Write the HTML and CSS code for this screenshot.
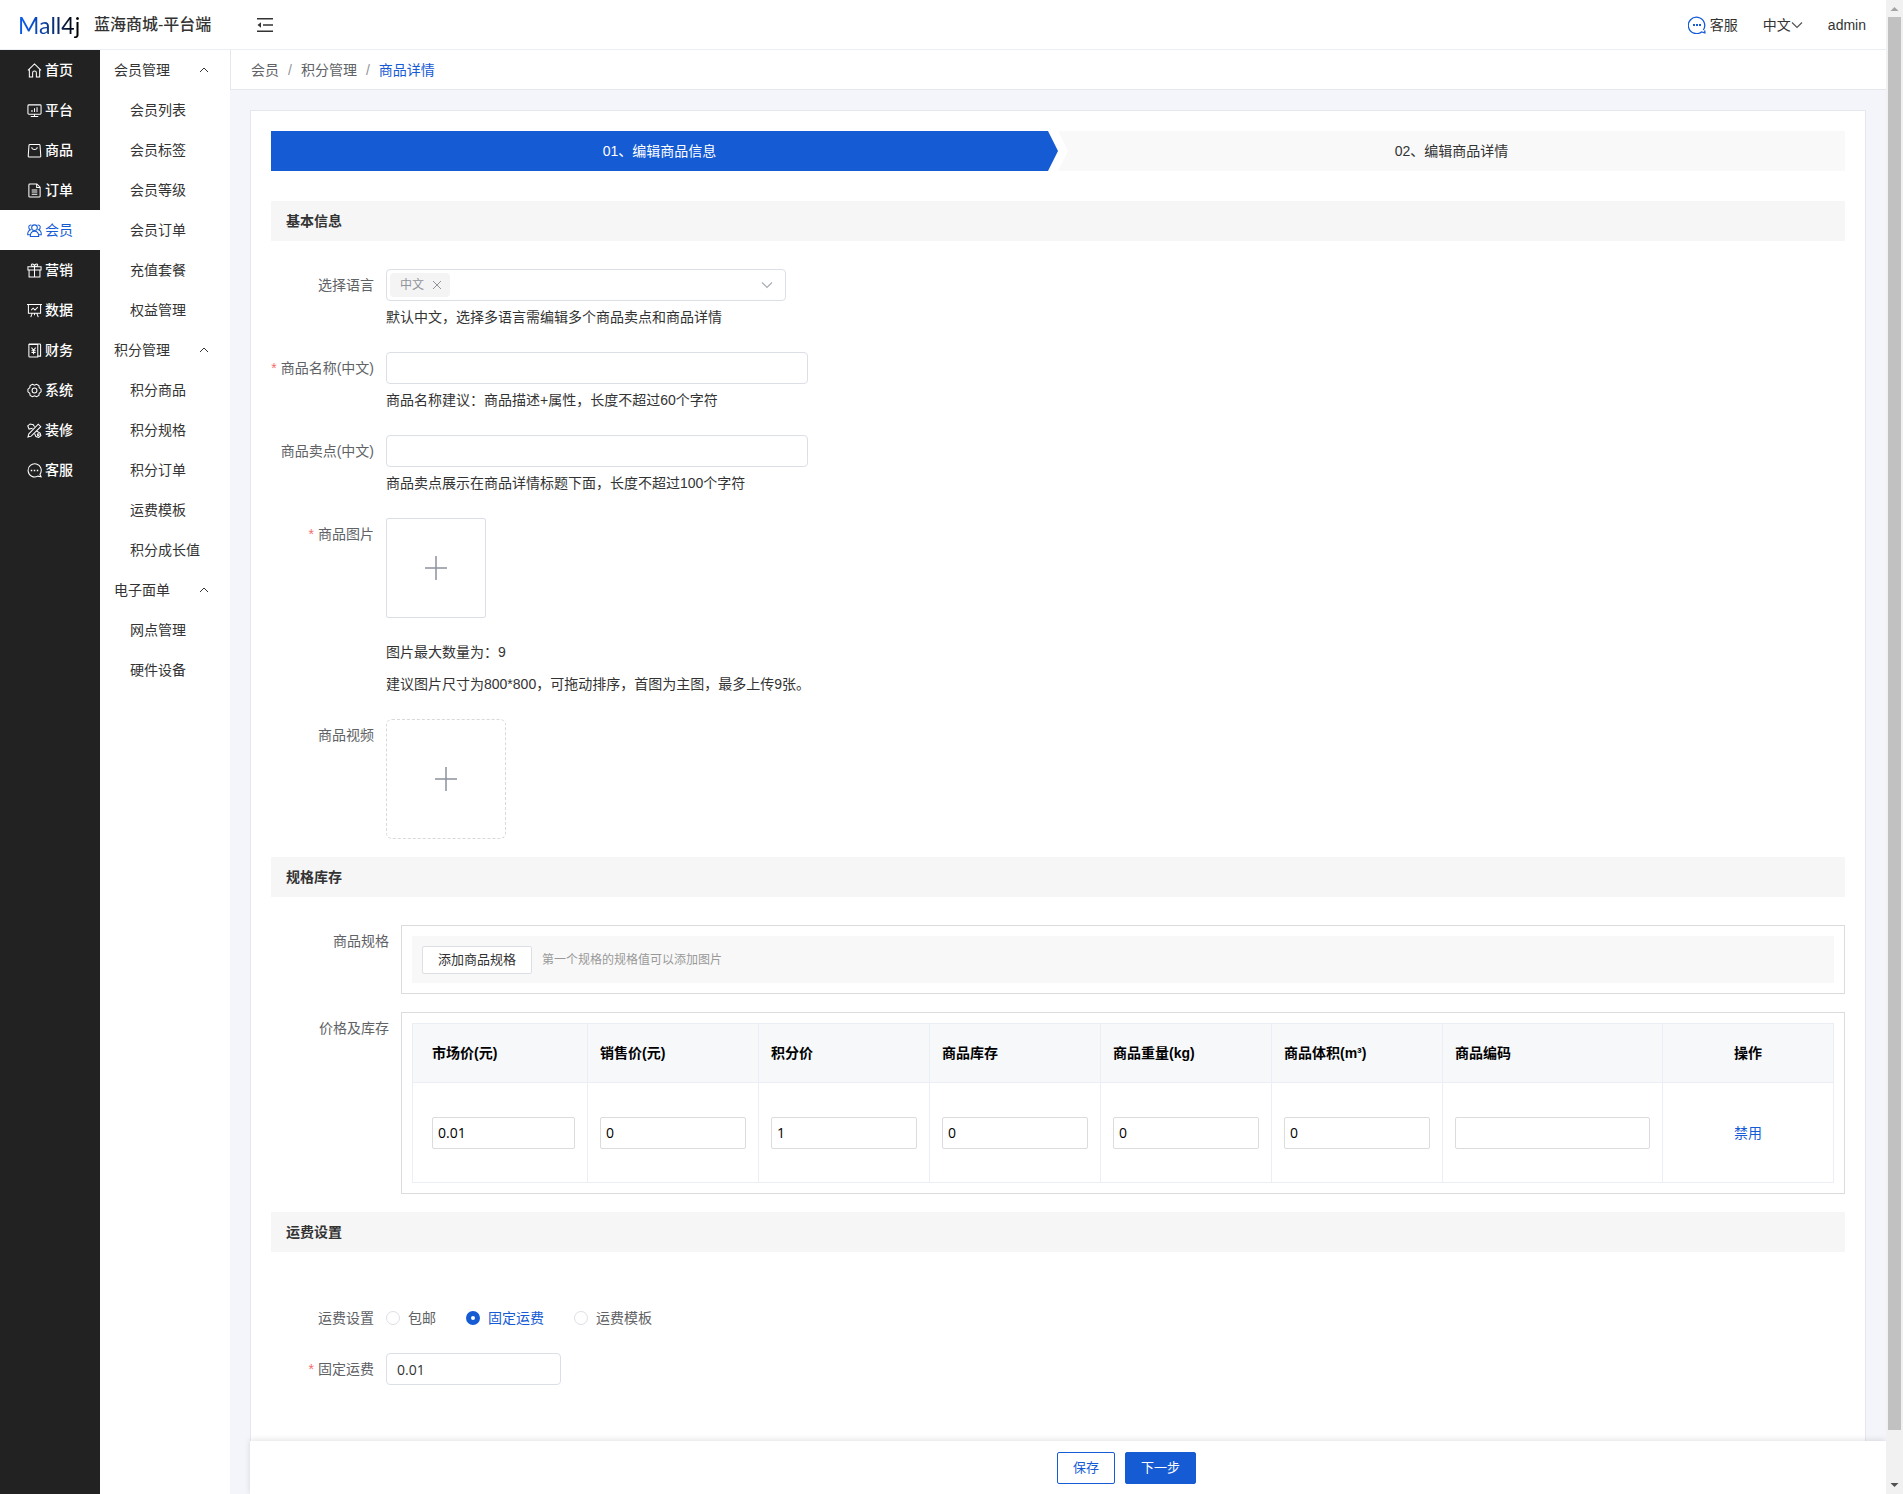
FILE: index.html
```html
<!DOCTYPE html>
<html lang="zh-CN">
<head>
<meta charset="utf-8">
<meta name="viewport" content="width=device-width, initial-scale=1">
<title>蓝海商城-平台端</title>
<link rel="stylesheet" href="styles.css">
</head>
<body>
<div class="app">
  <header class="topbar">
    <a class="brand" href="#"><span class="brand-mark">Mall4j</span><span class="brand-name">蓝海商城-平台端</span></a>
    <button class="fold" type="button" aria-label="折叠菜单">
      <svg width="16" height="14" viewBox="0 0 16 14"><path d="M0 .8h16M6 7h10M0 13.2h16" fill="none" stroke="#333" stroke-width="1.4"/><path d="M4 4.2v5.600L.5 7z" fill="#333"/></svg>
    </button>
    <nav class="tools">
      <a class="tool service" href="#"><svg width="18" height="18" viewBox="0 0 18 18" fill="none" stroke="#155bd4" stroke-width="1.3"><path d="M15.300 14A8.200 8.200 0 1 0 13.500 15.900l3.400.9-.2-2.400"/><path d="M5 9h2M8 9h2M11 9h2" stroke-width="2"/></svg>客服</a>
      <a class="tool lang" href="#">中文<svg width="12" height="8" viewBox="0 0 12 8"><path d="M1 1.500l5 5 5-5" fill="none" stroke="#555" stroke-width="1.2"/></svg></a>
      <a class="tool" href="#">admin</a>
    </nav>
  </header>

  <nav class="main-nav">
    <a href="#"><svg viewBox="0 0 16 16"><path d="M1 7.800 8 1l7 6.800M2.500 6.800V15H6v-4.500a2 2 0 0 1 4 0V15h3.500V6.800"/></svg>首页</a>
    <a href="#"><svg viewBox="0 0 16 16"><rect x="1" y="2" width="14" height="10" rx="1"/><path d="M4 14.500h8M8 12v2.500M5.300 9.500v-2M8 9.500v-4M10.700 9.500v-5"/></svg>平台</a>
    <a href="#"><svg viewBox="0 0 16 16"><path d="M3 1.500h10q.8 0 .9 1l.8 11.500q0 1-1 1H2.300q-1 0-1-1l.8-11.500q.1-1 .9-1z"/><path d="M5 4.500c.5 3.300 5.500 3.300 6 0"/></svg>商品</a>
    <a href="#"><svg viewBox="0 0 16 16"><path d="M3 1h7.500L14 4.500V14q0 1-1 1H3q-1 0-1-1V2q0-1 1-1zM10.300 1v3.700H14M5 7.500h6M5 9.700h6M5 12h6"/></svg>订单</a>
    <a href="#" class="current" aria-current="page"><svg viewBox="0 0 16 16"><circle cx="8" cy="5" r="3"/><path d="M3.500 14.500c0-7.500 9-7.500 9 0zM4.700 2.300C1.500 1.500.8 5.800 3.600 7.200 1.600 8 .7 9.700.7 12.500h2.600M11.300 2.300c3.200-.8 3.900 3.500 1.100 4.900 2 .8 2.900 2.500 2.900 5.300h-2.600"/></svg>会员</a>
    <a href="#"><svg viewBox="0 0 16 16"><path d="M1 4h14v3.500H1zM2.200 7.500V15h11.600V7.500M8 4v11M8 4C4 4 4 1 5.500 1S8 2.500 8 4c0-1.500 1-3 2.500-3S12 4 8 4"/></svg>营销</a>
    <a href="#"><svg viewBox="0 0 16 16"><path d="M0 1.500h16M1.500 1.500V11h13V1.500M4.500 7.500l2-2 2 2 3-3M5.500 11 4 15M10.500 11l1.500 4M8 11v2"/></svg>数据</a>
    <a href="#"><svg viewBox="0 0 16 16"><path d="M2 1.500h9.500V15H3q-1 0-1-1zM2 1h11.500q1 0 1 1v12h-3"/><path d="m4.800 5 2.200 2.700L9.200 5M7 7.700V12M4.800 8.300h4.400M4.800 10.200h4.400"/></svg>财务</a>
    <a href="#"><svg viewBox="0 0 16 16"><path d="M5.800 1.300 8 2.300l2.200-1 2.500 1.400.3 2.400 2 1.500v2.800l-2 1.500-.3 2.400-2.500 1.400-2.200-1-2.200 1-2.500-1.400L3 10.900 1 9.400V6.600l2-1.500.3-2.400z"/><circle cx="8" cy="8" r="2.600"/></svg>系统</a>
    <a href="#"><svg viewBox="0 0 16 16"><path d="m1 15 1-3.500L12 1.300l2.700 2.600L4.500 14zM6 5.500 2.200 6.500.8 3l2.500-2 3.400.8L8 4M10 8.500l4 2.200.8 2.800-2.300 1.800-3-.8-1.300-3"/><circle cx="12" cy="12.500" r="1"/></svg>装修</a>
    <a href="#"><svg viewBox="0 0 16 16"><path d="M13.800 12A7 7 0 1 0 11.500 14l3.500.7z"/><path d="M4 8h1.600M7.200 8h1.600M10.400 8H12" stroke-width="1.600"/></svg>客服</a>
  </nav>

  <nav class="sub-nav">
    <button type="button" aria-expanded="true">会员管理<svg viewBox="0 0 10 6"><path d="m1 5 4-4 4 4"/></svg></button>
    <a href="#">会员列表</a><a href="#">会员标签</a><a href="#">会员等级</a><a href="#">会员订单</a><a href="#">充值套餐</a><a href="#">权益管理</a>
    <button type="button" aria-expanded="true">积分管理<svg viewBox="0 0 10 6"><path d="m1 5 4-4 4 4"/></svg></button>
    <a href="#">积分商品</a><a href="#">积分规格</a><a href="#">积分订单</a><a href="#">运费模板</a><a href="#">积分成长值</a>
    <button type="button" aria-expanded="true">电子面单<svg viewBox="0 0 10 6"><path d="m1 5 4-4 4 4"/></svg></button>
    <a href="#">网点管理</a><a href="#">硬件设备</a>
  </nav>

  <main class="main">
    <nav class="crumbs" aria-label="面包屑"><a href="#">会员</a><span class="sep">/</span><a href="#">积分管理</a><span class="sep">/</span><a class="here" href="#">商品详情</a></nav>

    <form class="card" id="goods">
      <ol class="steps">
        <li class="step active">01、编辑商品信息</li>
        <li class="step">02、编辑商品详情</li>
      </ol>

      <h2 class="section-title first">基本信息</h2>
      <div class="rows">
        <div class="row">
          <label class="label" for="lang">选择语言</label>
          <div>
            <div class="multi-select">
              <span class="tag">中文<button type="button" aria-label="移除中文"><svg width="10" height="10" viewBox="0 0 10 10"><path d="m1 1 8 8M9 1 1 9" fill="none" stroke="#909399"/></svg></button></span>
              <select id="lang"><option></option><option>English</option></select>
              <svg class="caret" width="12" height="8" viewBox="0 0 12 8"><path d="m1 1.500 5 5 5-5" fill="none" stroke="#a8abb2" stroke-width="1.200"/></svg>
            </div>
            <p class="hint">默认中文，选择多语言需编辑多个商品卖点和商品详情</p>
          </div>
        </div>
        <div class="row">
          <label class="label required" for="name">商品名称(中文)</label>
          <div>
            <input class="input wide" id="name" type="text">
            <p class="hint">商品名称建议：商品描述+属性，长度不超过60个字符</p>
          </div>
        </div>
        <div class="row">
          <label class="label" for="brief">商品卖点(中文)</label>
          <div>
            <input class="input wide" id="brief" type="text">
            <p class="hint">商品卖点展示在商品详情标题下面，长度不超过100个字符</p>
          </div>
        </div>
        <div class="row">
          <span class="label required">商品图片</span>
          <div>
            <button class="upload picture" type="button" aria-label="上传商品图片"><svg width="24" height="24" viewBox="0 0 24 24"><path d="M12 0v24M1 12h22" fill="none" stroke="#8c939d" stroke-width="1.500"/></svg></button>
            <p class="hint">图片最大数量为：9</p>
            <p class="hint">建议图片尺寸为800*800，可拖动排序，首图为主图，最多上传9张。</p>
          </div>
        </div>
        <div class="row">
          <span class="label">商品视频</span>
          <div>
            <button class="upload video" type="button" aria-label="上传商品视频"><svg width="24" height="24" viewBox="0 0 24 24"><path d="M12 0v24M1 12h22" fill="none" stroke="#8c939d" stroke-width="1.500"/></svg></button>
          </div>
        </div>
      </div>

      <h2 class="section-title">规格库存</h2>
      <div class="rows stock">
        <div class="row">
          <span class="label">商品规格</span>
          <div class="box">
            <div class="spec-bar"><button class="small-btn" type="button">添加商品规格</button><span>第一个规格的规格值可以添加图片</span></div>
          </div>
        </div>
        <div class="row">
          <span class="label">价格及库存</span>
          <div class="box">
            <table class="sku">
              <thead>
                <tr><th class="first-col">市场价(元)</th><th>销售价(元)</th><th>积分价</th><th>商品库存</th><th>商品重量(kg)</th><th>商品体积(m³)</th><th class="code-col">商品编码</th><th class="action">操作</th></tr>
              </thead>
              <tbody>
                <tr>
                  <td class="first-col"><input type="text" aria-label="市场价" value="0.01"></td>
                  <td><input type="text" aria-label="销售价" value="0"></td>
                  <td><input type="text" aria-label="积分价" value="1"></td>
                  <td><input type="text" aria-label="商品库存" value="0"></td>
                  <td><input type="text" aria-label="商品重量" value="0"></td>
                  <td><input type="text" aria-label="商品体积" value="0"></td>
                  <td><input type="text" aria-label="商品编码"></td>
                  <td class="action"><a href="#">禁用</a></td>
                </tr>
              </tbody>
            </table>
          </div>
        </div>
      </div>

      <h2 class="section-title">运费设置</h2>
      <div class="rows freight">
        <div class="row">
          <span class="label">运费设置</span>
          <div class="radios" role="radiogroup" aria-label="运费设置">
            <label><input type="radio" name="freight">包邮</label>
            <label><input type="radio" name="freight" checked>固定运费</label>
            <label><input type="radio" name="freight">运费模板</label>
          </div>
        </div>
        <div class="row">
          <label class="label required" for="fee">固定运费</label>
          <div><input class="input fee" id="fee" type="text" value="0.01"></div>
        </div>
      </div>
    </form>

    <footer class="actions">
      <button class="btn" type="button">保存</button>
      <button class="btn primary" type="submit" form="goods">下一步</button>
    </footer>
  </main>

  <div class="scrollbar" aria-hidden="true">
    <svg width="17" height="17" viewBox="0 0 17 17"><path d="M4.500 11h8l-4-4z" fill="#a3a3a3"/></svg>
    <span class="thumb"></span>
    <svg width="17" height="17" viewBox="0 0 17 17"><path d="M4.500 6h8l-4 4z" fill="#505050"/></svg>
  </div>
</div>
</body>
</html>
```
FILE: styles.css
```css
* { box-sizing: border-box; }

body {
  margin: 0;
  color: #333;
  background: #f4f5fa;
  font: 14px/20px "Liberation Sans", "Noto Sans CJK SC", sans-serif;
}

a { color: inherit; text-decoration: none; }
button, input, select { font: inherit; color: inherit; }
button { padding: 0; border: 0; background: none; cursor: pointer; }
p, h2, ol { margin: 0; padding: 0; }

.app {
  display: grid;
  grid-template: 50px 1fr / 100px 130px minmax(0, 1fr) 17px;
  min-height: 100vh;
}

/* top bar */
.topbar {
  grid-column: 1 / 4;
  display: flex;
  align-items: center;
  padding: 0 20px 0 18px;
  border-bottom: 1px solid #ebeef5;
  background: #fff;
}
.brand { display: flex; align-items: center; gap: 12px; width: 239px; }
.brand-mark {
  width: 64px;
  font: 23px/28px Lato, sans-serif;
  color: transparent;
  background: linear-gradient(90deg, #0a5ae6 10%, #0b2e6e 60%, #000 90%);
  -webkit-background-clip: text;
  background-clip: text;
}
.brand-name { font-size: 16px; font-weight: 500; white-space: nowrap; }
.fold { display: flex; }
.tools { display: flex; gap: 25px; margin-left: auto; }
.tool { display: flex; align-items: center; gap: 4px; }
.lang { gap: 0; }

/* menus */
.main-nav { padding-bottom: 40px; background: #222; color: #fff; }
.main-nav a {
  display: flex;
  align-items: center;
  gap: 3px;
  height: 40px;
  padding-left: 27px;
  font-weight: 500;
}
.main-nav .current { background: #fff; color: #155bd4; font-weight: 400; }
.main-nav svg { width: 15px; height: 15px; fill: none; stroke: currentColor; stroke-width: 1.1; }
.sub-nav { display: flex; flex-direction: column; background: #fff; }
.sub-nav a { padding-left: 30px; line-height: 40px; }
.sub-nav button {
  display: flex;
  align-items: center;
  justify-content: space-between;
  height: 40px;
  padding: 0 21px 0 14px;
}
.sub-nav svg { width: 10px; height: 6px; fill: none; stroke: #333; }

/* content */
.main { display: flex; flex-direction: column; }
.crumbs {
  display: flex;
  gap: 9px;
  height: 40px;
  padding-left: 20px;
  border-bottom: 1px solid #e4e7ed;
  border-left: 1px solid #e4e7ed;
  background: #fff;
  color: #606266;
  line-height: 40px;
}
.sep { color: #909399; }
.here { color: #155bd4; }
.card {
  flex: 1;
  margin: 20px 20px 0;
  padding: 20px 20px 55px;
  border: 1px solid #e4e7ed;
  border-bottom: 0;
  background: #fff;
}

.steps { display: grid; grid-template-columns: 1fr 1fr; list-style: none; }
.step {
  background: #f9f9f9;
  line-height: 40px;
  text-align: center;
  clip-path: polygon(0 0, 100% 0, 100% 100%, 0 100%, 10px 50%);
}
.step.active {
  padding-right: 10px;
  background: #155bd4;
  color: #fff;
  clip-path: polygon(0 0, calc(100% - 10px) 0, 100% 50%, calc(100% - 10px) 100%, 0 100%);
}

.section-title {
  margin: 18px 0 28px;
  padding-left: 15px;
  background: #f6f6f6;
  font-size: 14px;
  line-height: 40px;
}
.section-title.first { margin-top: 30px; }

.rows { display: grid; gap: 19px; }
.row { display: grid; grid-template-columns: 103px minmax(0, 1fr); column-gap: 12px; }
.label { color: #606266; line-height: 32px; text-align: right; white-space: nowrap; }
.required::before { content: "*"; margin-right: 4px; color: #f56c6c; }
.hint { line-height: 32px; }

.input {
  display: block;
  height: 32px;
  padding: 0 10px;
  border: 1px solid #dcdfe6;
  border-radius: 4px;
  background: #fff;
  font-family: "Open Sans", "Noto Sans CJK SC", sans-serif;
}
.wide { width: 422px; max-width: 100%; }
.fee { width: 175px; }

.multi-select {
  display: flex;
  align-items: center;
  width: 400px;
  max-width: 100%;
  height: 32px;
  padding: 0 12px 0 3px;
  border: 1px solid #dcdfe6;
  border-radius: 4px;
}
.multi-select select { flex: 1; min-width: 0; border: 0; background: none; appearance: none; outline: 0; }
.tag {
  display: flex;
  align-items: center;
  gap: 8px;
  height: 24px;
  padding: 0 8px 0 10px;
  border-radius: 4px;
  background: #f4f4f5;
  color: #909399;
  font-size: 12px;
}
.tag button { display: flex; }

.upload {
  display: flex;
  align-items: center;
  justify-content: center;
  border: 1px solid #dcdfe6;
}
.picture { width: 100px; height: 100px; margin-bottom: 18px; border-radius: 2px; }
.video { width: 120px; height: 120px; border: 1px dashed #d9d9d9; border-radius: 6px; }

/* specifications and stock */
.stock { gap: 18px; }
.stock .row { grid-template-columns: 118px minmax(0, 1fr); }
.box { padding: 10px; border: 1px solid #dcdcdc; }
.spec-bar {
  display: flex;
  align-items: center;
  gap: 10px;
  height: 47px;
  padding: 0 10px;
  background: #f8f8f8;
  color: #999;
  font-size: 12px;
}
.small-btn {
  width: 110px;
  height: 28px;
  border: 1px solid #dcdfe6;
  border-radius: 2px;
  background: #fff;
  color: #333;
  font-size: 13px;
}
.sku { width: 100%; border-collapse: collapse; table-layout: fixed; color: #000; }
.sku th, .sku td { padding: 0 12px; border: 1px solid #ebeef5; text-align: left; }
.sku th { height: 59px; background: #f7f8fa; }
.sku td { height: 100px; }
.sku .first-col { width: 175px; padding-left: 19px; }
.sku .code-col { width: 220px; }
.sku .action { text-align: center; }
.sku td.action { color: #155bd4; }
.sku input {
  display: block;
  width: 100%;
  height: 32px;
  padding: 0 5px;
  border: 1px solid #dcdcdc;
  border-radius: 2px;
  font-family: "Open Sans", "Noto Sans CJK SC", sans-serif;
}

/* freight */
.freight { padding-top: 22px; }
.radios { display: flex; gap: 30px; color: #606266; }
.radios label { display: flex; align-items: center; gap: 8px; }
.radios label:has(:checked) { color: #155bd4; }
.radios input {
  width: 14px;
  height: 14px;
  margin: 0;
  border: 1px solid #dcdfe6;
  border-radius: 50%;
  background: #fff;
  appearance: none;
}
.radios input:checked { border: 5px solid #155bd4; }

.actions {
  display: flex;
  justify-content: center;
  gap: 10px;
  margin-left: 20px;
  padding: 11px 0 10px 117px;
  background: #fff;
  box-shadow: 0 -1px 6px rgba(0, 0, 0, .12);
  clip-path: inset(-10px 0 0 -10px);
}
.btn {
  height: 32px;
  padding: 0 15px;
  border: 1px solid #155bd4;
  border-radius: 2px;
  background: #fff;
  color: #155bd4;
  font-size: 13px;
}
.btn.primary { background: #155bd4; color: #fff; }

.scrollbar {
  grid-area: 1 / 4 / 3 / 5;
  display: flex;
  flex-direction: column;
  background: #f1f1f1;
}
.thumb { flex: 1; margin: 0 2px 47px; background: #c1c1c1; }
```
